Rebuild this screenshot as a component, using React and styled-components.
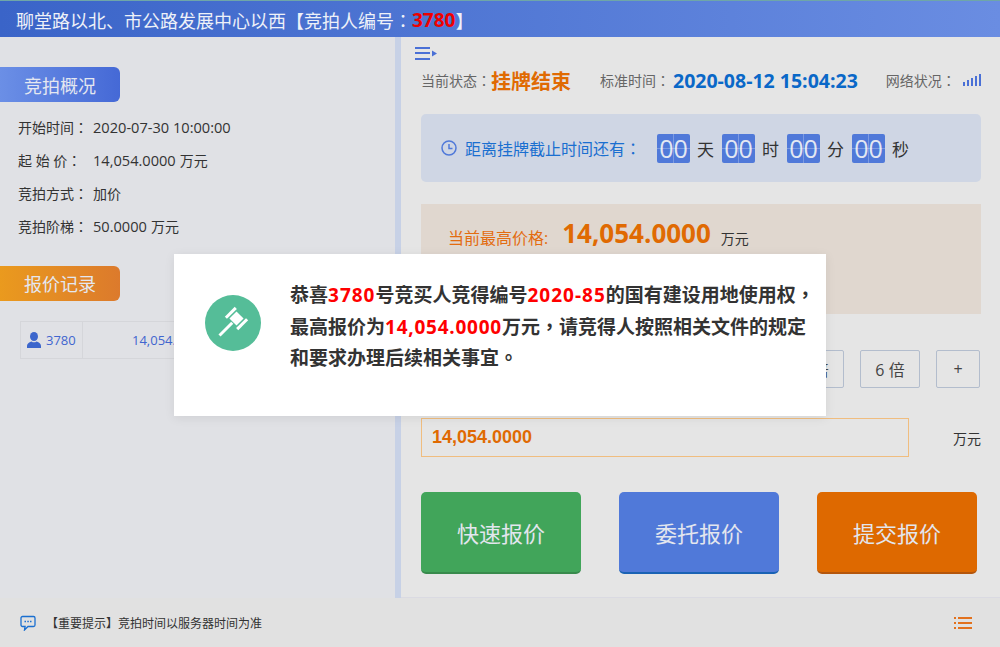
import React from "react";
import styled, { createGlobalStyle } from "styled-components";

const Global = createGlobalStyle`
  html, body { margin: 0; padding: 0; height: 100%; overflow: hidden; background: #e1e1e1; }
  * { box-sizing: border-box; }
  body { font-family: "Open Sans", "Noto Sans CJK SC", "Noto Sans", sans-serif; color: #333; }
`;

const Page = styled.div`
  width: 1000px; height: 647px; display: flex; flex-direction: column; position: relative; overflow: hidden;
`;
const Mark = styled.span` font-family: "Noto Sans CJK TC", sans-serif; `;
const Header = styled.header`
  height: 37px; flex: none; display: flex; align-items: center; padding: 1px 0 0 16px;
  background: linear-gradient(90deg, #3a64c8 0%, #6a8de2 100%);
  border-top: 1px solid #6fa6a8;
  color: #eef1f8; font-size: 18px; white-space: nowrap;
`;
const HeadNo = styled.b` color: #f00000; font-size: 19px; `;
const Main = styled.div` flex: 1; display: flex; min-height: 0; `;
const Left = styled.aside`
  width: 395px; flex: none; padding-top: 30px; background: #e0e1e5; overflow: hidden;
`;
const Divider = styled.div` width: 6px; flex: none; background: #c7d1e6; `;
const Tag = styled.div`
  width: 120px; height: 35px; display: flex; align-items: center; padding-left: 24px;
  border-radius: 0 6px 6px 0; font-size: 18px; color: #e4e7f0;
  background: ${p => p.$orange ? "linear-gradient(90deg,#ea9a1e,#dc7a2c)" : "linear-gradient(90deg,#6b8fe6,#4569d6)"};
`;
const Info = styled.div` padding: 8px 0 23px 18px; `;
const InfoRow = styled.div`
  height: 33.4px; display: flex; align-items: center; gap: 4px; font-size: 14px; color: #333; margin-top: -0.2px;
`;
const InfoLabel = styled.span` width: 71px; flex: none; white-space: pre; `;
const InfoNum = styled.span` font-size: 14.6px; `;
const RecordTable = styled.div`
  margin: 20px 0 0 20px; width: 380px; height: 38px; display: flex;
  border: 1px solid #d5d6da; color: #4066cf; font-size: 13px;
`;
const RecordUser = styled.div`
  width: 62px; flex: none; border-right: 1px solid #d5d6da; display: flex; align-items: center;
  gap: 5px; padding-left: 6px;
`;
const RecordPrice = styled.div` flex: 1; display: flex; align-items: center; padding-left: 49px; `;

const Right = styled.section`
  flex: 1; background: #e5e5e5; padding: 10px 19px 0 20px; border-bottom: 1px solid #dadae2;
`;
const MenuIcon = styled.svg` display: block; margin-left: -6px; `;
const StatusBar = styled.div`
  margin-top: 2px; height: 36px; display: flex; align-items: center; font-size: 14px; color: #666; white-space: nowrap;
`;
const StatusText = styled.b` font-size: 20px; color: #e06a02; margin-right: 29px; `;
const ClockText = styled.b` font-size: 19.5px; color: #0a68c8; margin: 0 28px 0 3px; `;
const Signal = styled.svg` margin-left: auto; `;
const CountBox = styled.div`
  margin-top: 16px; height: 68px; border-radius: 5px; background: #cfd6e4; display: flex; align-items: center;
  padding-left: 20px; font-size: 16px;
`;
const CountLabel = styled.span` color: #1a6fd0; margin-left: 8px; width: 192px; flex: none; white-space: nowrap; `;
const Unit = styled.div` display: flex; align-items: center; width: 65px; flex: none; `;
const Digits = styled.span`
  position: relative; width: 33px; height: 29px; border-radius: 2px; background: #5079d9; color: #e3e7f2;
  font-size: 25px; display: flex; align-items: center; justify-content: center; line-height: 1;
  &::before { content: ""; position: absolute; left: 0; right: 0; top: 14px; height: 1px; background: rgba(255,255,255,.25); }
  &::after { content: ""; position: absolute; top: 0; bottom: 0; left: 16px; width: 1px; background: rgba(255,255,255,.25); }
`;
const UnitText = styled.span` margin-left: 7px; color: #333; font-size: 17px; `;
const PriceBox = styled.div`
  margin-top: 22px; height: 110px; background: #e0d7cf; padding: 11px 27px; display: flex; align-items: flex-start;
  white-space: nowrap;
`;
const PriceLabel = styled.span` color: #e36c10; font-size: 16px; margin-top: 10px; `;
const PriceValue = styled.b` color: #e06a02; font-size: 26px; margin: 0 10px 0 14px; line-height: 36px; `;
const PriceUnit = styled.span` color: #333; font-size: 14px; margin-top: 13px; `;
const StepRow = styled.div` margin: 36px 1px 0 0; display: flex; justify-content: flex-end; gap: 16px; `;
const Step = styled.button`
  width: ${p => p.$narrow ? "44px" : "60px"}; height: 38px; padding: 0; border: 1px solid #b3bdcd; border-radius: 2px;
  background: transparent; color: #444; font: inherit; font-size: 16px;
`;
const InputRow = styled.div` margin-top: 30px; display: flex; align-items: center; justify-content: space-between; `;
const PriceInput = styled.div`
  width: 488px; height: 39px; border: 1px solid #f0bd7f; display: flex; align-items: center; padding-left: 10px;
  color: #e06a02; font-size: 18px; font-weight: 700; font-family: "Liberation Sans", sans-serif;
`;
const InputUnit = styled.span` font-size: 14px; color: #333; `;
const Actions = styled.div` margin-top: 35px; display: flex; gap: 38px; `;
const Action = styled.button`
  width: 160px; height: 82px; border: 0; border-radius: 5px; padding: 0; font: inherit; font-size: 22px; color: #e3e6ee;
  background: ${p => p.$bg}; border-bottom: 2px solid ${p => p.$edge};
`;
const Footer = styled.footer`
  height: 49px; flex: none; background: #e1e1e1; display: flex; align-items: center; padding: 0 28px 0 20px;
  font-size: 12px; color: #333;
`;
const FooterText = styled.span` margin-left: 10px; `;
const FooterIcon = styled.svg` margin-left: auto; `;
const Modal = styled.div`
  position: absolute; left: 174px; top: 254px; width: 652px; height: 162px; background: #fff;
  box-shadow: 0 2px 10px rgba(0,0,0,.08); display: flex; padding: 25px 0 0 31px;
`;
const Badge = styled.svg` flex: none; margin-top: 16px; `;
const ModalText = styled.p`
  margin: 0 0 0 29px; font-size: 19px; line-height: 30.5px; font-weight: 700; color: #333; white-space: nowrap;
`;
const Hot = styled.span` color: #f00; letter-spacing: ${p => p.$tight ? "0.75px" : "1px"}; `;

const PersonIcon = () => (
  <svg width="14" height="16" viewBox="0 0 14 16" fill="#3c66cc">
    <ellipse cx="7" cy="4.5" rx="4" ry="4.5" />
    <path d="M0 16v-2.2C0 11.4 2.6 10 4.6 9.4 5.3 10 6 10.3 7 10.3s1.7-.3 2.4-.9c2 .6 4.6 2 4.6 4.4V16z" />
  </svg>
);

export default function App() {
  return (
    <Page>
      <Global />
      <Header>聊堂路以北、市公路发展中心以西【竞拍人编号<Mark>：</Mark><HeadNo>3780</HeadNo>】</Header>
      <Main>
        <Left>
          <Tag>竞拍概况</Tag>
          <Info>
            <InfoRow><InfoLabel>开始时间<Mark>：</Mark></InfoLabel><InfoNum>2020-07-30 10:00:00</InfoNum></InfoRow>
            <InfoRow><InfoLabel>起 始 价<Mark>：</Mark></InfoLabel><InfoNum>14,054.0000</InfoNum>万元</InfoRow>
            <InfoRow><InfoLabel>竞拍方式<Mark>：</Mark></InfoLabel>加价</InfoRow>
            <InfoRow><InfoLabel>竞拍阶梯<Mark>：</Mark></InfoLabel><InfoNum>50.0000</InfoNum>万元</InfoRow>
          </Info>
          <Tag $orange>报价记录</Tag>
          <RecordTable>
            <RecordUser><PersonIcon />3780</RecordUser>
            <RecordPrice>14,054.0000</RecordPrice>
          </RecordTable>
        </Left>
        <Divider />
        <Right>
          <MenuIcon width="22" height="13" viewBox="0 0 22 13" fill="#4a70d6">
            <rect y="0" width="15" height="2" /><rect y="5" width="15" height="2" /><rect y="11" width="15" height="2" />
            <path d="M17 3.5l5 3-5 3z" />
          </MenuIcon>
          <StatusBar>
            当前状态<Mark>：</Mark><StatusText>挂牌结束</StatusText>
            标准时间<Mark>：</Mark><ClockText>2020-08-12 15:04:23</ClockText>
            网络状况<Mark>：</Mark>
            <Signal width="18" height="12" viewBox="0 0 18 12" fill="#4a70d6">
              <rect x="0" y="8" width="2" height="4" /><rect x="4" y="6" width="2" height="6" />
              <rect x="8" y="4" width="2" height="8" /><rect x="12" y="2" width="2" height="10" />
              <rect x="16" y="0" width="2" height="12" />
            </Signal>
          </StatusBar>
          <CountBox>
            <svg width="16" height="16" viewBox="0 0 16 16" fill="none" stroke="#5079d9" strokeWidth="1.5">
              <circle cx="8" cy="8" r="7" /><path d="M8 4v4.5h3.5" />
            </svg>
            <CountLabel>距离挂牌截止时间还有<Mark>：</Mark></CountLabel>
            {["天", "时", "分", "秒"].map(u => (
              <Unit key={u}><Digits>00</Digits><UnitText>{u}</UnitText></Unit>
            ))}
          </CountBox>
          <PriceBox>
            <PriceLabel>当前最高价格:</PriceLabel>
            <PriceValue>14,054.0000</PriceValue>
            <PriceUnit>万元</PriceUnit>
          </PriceBox>
          <StepRow>
            <Step>5 倍</Step>
            <Step>6 倍</Step>
            <Step $narrow>+</Step>
          </StepRow>
          <InputRow>
            <PriceInput>14,054.0000</PriceInput>
            <InputUnit>万元</InputUnit>
          </InputRow>
          <Actions>
            <Action $bg="#41a55a" $edge="#388a4c">快速报价</Action>
            <Action $bg="#5079d9" $edge="#1a62b4">委托报价</Action>
            <Action $bg="#de6900" $edge="#b4560c">提交报价</Action>
          </Actions>
        </Right>
      </Main>
      <Footer>
        <svg width="16" height="16" viewBox="0 0 16 16" fill="none" stroke="#1a6fd0" strokeWidth="1.3">
          <path d="M2.5 1.5h11a1.5 1.5 0 0 1 1.5 1.5v7a1.5 1.5 0 0 1-1.5 1.5H8L4.5 15l.6-3.5H2.5A1.5 1.5 0 0 1 1 10V3a1.5 1.5 0 0 1 1.5-1.5z" />
          <path d="M4.5 6.5h1.5M7.3 6.5h1.5M10 6.5h1.5" />
        </svg>
        <FooterText>【重要提示】竞拍时间以服务器时间为准</FooterText>
        <FooterIcon width="18" height="12" viewBox="0 0 18 12" fill="#e2711d">
          <rect x="0" y="0" width="2" height="2" /><rect x="4" y="0" width="14" height="2" />
          <rect x="0" y="5" width="2" height="2" /><rect x="4" y="5" width="14" height="2" />
          <rect x="0" y="10" width="2" height="2" /><rect x="4" y="10" width="14" height="2" />
        </FooterIcon>
      </Footer>
      <Modal>
        <Badge width="56" height="56" viewBox="0 0 56 56">
          <circle cx="28" cy="28" r="28" fill="#55bd98" />
          <g fill="#fff" transform="translate(31.5 23.5) rotate(-45)">
            <rect x="-7" y="-9.5" width="14" height="3" />
            <rect x="-5" y="-5" width="10" height="10" />
            <rect x="-7" y="6.5" width="14" height="3" />
            <rect x="-24" y="-1.5" width="18" height="3" />
          </g>
        </Badge>
        <ModalText>
          恭喜<Hot>3780</Hot>号竞买人竞得编号<Hot>2020-85</Hot>的国有建设用地使用权<Mark>，</Mark><br />
          最高报价为<Hot $tight>14,054.0000</Hot>万元<Mark>，</Mark>请竞得人按照相关文件的规定<br />
          和要求办理后续相关事宜<Mark>。</Mark>
        </ModalText>
      </Modal>
    </Page>
  );
}
